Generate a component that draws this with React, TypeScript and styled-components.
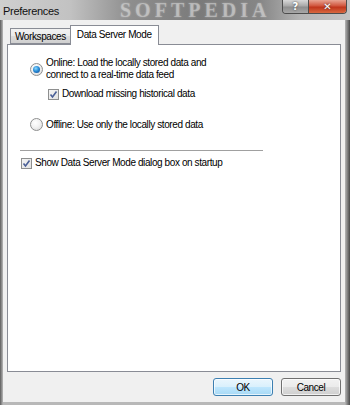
import React, { useState } from 'react';
import styled, { createGlobalStyle } from 'styled-components';

const GlobalStyle = createGlobalStyle`
  html, body {
    margin: 0;
    padding: 0;
    background: #6a6a6a;
  }
  * { box-sizing: border-box; }
`;

const Window = styled.div`
  width: 350px;
  height: 405px;
  display: flex;
  flex-direction: column;
  background: linear-gradient(90deg, #5c5c5c 0px, #9a9a9a 2px, #b8b8b8 3px, #b8b8b8 345px, #8a8a8a 347px, #4a4a4a 350px);
  font-family: "Liberation Sans", Arial, sans-serif;
  font-size: 10px;
  letter-spacing: -0.4px;
  color: #000;
  overflow: hidden;
`;

const TitleBar = styled.div`
  height: 20px;
  flex: none;
  display: flex;
  align-items: flex-start;
  position: relative;
  overflow: hidden;
  background: linear-gradient(90deg, #cfcfcf 0px, #c2c2c2 70px, #8e8e8e 130px, #7a7a7a 200px, #868686 260px, #b4b4b4 300px, #c4c4c4 350px);
`;

const Title = styled.div`
  padding: 5px 0 0 3px;
  font-size: 11px;
  letter-spacing: -0.3px;
  color: #111;
  flex: 1;
`;

const Watermark = styled.div`
  position: absolute;
  left: 120px;
  top: 0;
  font-family: "Liberation Serif", serif;
  font-weight: bold;
  font-size: 20px;
  line-height: 20px;
  letter-spacing: 4px;
  color: rgba(225, 225, 225, 0.45);
  text-shadow: 0 0 2px rgba(255, 255, 255, 0.3);
  pointer-events: none;
`;

const CaptionButtons = styled.div`
  display: flex;
  margin-right: 3px;
  height: 14px;
  border: 1px solid #4d4d4d;
  border-top: none;
  border-radius: 0 0 4px 4px;
  overflow: hidden;
  position: relative;
`;

const CaptionButton = styled.div<{ $close?: boolean }>`
  width: ${p => (p.$close ? '38px' : '25px')};
  height: 100%;
  display: flex;
  align-items: center;
  justify-content: center;
  color: #fff;
  font-family: "DejaVu Sans", sans-serif;
  font-weight: bold;
  font-size: 10px;
  letter-spacing: 0;
  border-left: ${p => (p.$close ? '1px solid #4d4d4d' : 'none')};
  background: ${p =>
    p.$close
      ? 'linear-gradient(180deg, #e8a493 0%, #d1563e 45%, #c0351c 55%, #d8683f 100%)'
      : 'linear-gradient(180deg, #d8d8d8 0%, #a9a9a9 45%, #8e8e8e 55%, #a8a8a8 100%)'};
  text-shadow: 0 0 2px #333;
`;

const Body = styled.div`
  flex: 1;
  margin: 0 5px 3px 3px;
  background: #f0f0f0;
  display: flex;
  flex-direction: column;
  padding: 5px 4px 6px 4px;
`;

const TabStrip = styled.div`
  display: flex;
  align-items: flex-end;
  height: 19px;
  padding-left: 3px;
  position: relative;
  z-index: 1;
`;

const Tab = styled.div<{ $active?: boolean }>`
  height: ${p => (p.$active ? '20px' : '16px')};
  padding: ${p => (p.$active ? '3px 6px 0 6px' : '2px 4px 0 4px')};
  margin-bottom: ${p => (p.$active ? '-1px' : '0')};
  border: 1px solid #898c95;
  border-bottom: ${p => (p.$active ? 'none' : '1px solid #898c95')};
  border-right: ${p => (p.$active ? '1px solid #898c95' : 'none')};
  background: ${p => (p.$active ? '#fff' : 'linear-gradient(180deg, #f2f2f2 0%, #ebebeb 50%, #dddddd 51%, #cfcfcf 100%)')};
  white-space: nowrap;
  cursor: default;
`;

const Panel = styled.div`
  flex: 1;
  background: #fff;
  border: 1px solid #898c95;
  display: flex;
  flex-direction: column;
  padding: 11px 0 0 0;
`;

const OptionRow = styled.div<{ $top: number; $left: number }>`
  display: flex;
  align-items: center;
  margin-top: ${p => p.$top}px;
  margin-left: ${p => p.$left}px;
  gap: 3px;
`;

const Label = styled.div`
  line-height: 12px;
  white-space: nowrap;
`;

const Radio = styled.div<{ $checked?: boolean }>`
  width: 13px;
  height: 13px;
  border-radius: 50%;
  border: 1px solid #8e8f8f;
  background: radial-gradient(circle at 40% 35%, #ffffff 0%, #f2f2f2 45%, #d4d4d4 100%);
  display: flex;
  align-items: center;
  justify-content: center;
  flex: none;
  &::after {
    content: '';
    display: ${p => (p.$checked ? 'block' : 'none')};
    width: 7px;
    height: 7px;
    border-radius: 50%;
    background: radial-gradient(circle at 40% 35%, #8fd9ff 0%, #2a8fd8 45%, #0f3f8c 100%);
  }
`;

const Box = styled.div`
  width: 11px;
  height: 11px;
  border: 1px solid #8e8f8f;
  background: linear-gradient(135deg, #f4f4f4 0%, #e2e2e2 100%);
  display: flex;
  align-items: center;
  justify-content: center;
  flex: none;
`;

const Separator = styled.div`
  margin: 19px 0 0 12px;
  width: 243px;
  height: 2px;
  border-top: 1px solid #a0a0a0;
  border-bottom: 1px solid #ffffff;
`;

const ButtonRow = styled.div`
  display: flex;
  justify-content: flex-end;
  gap: 8px;
  margin-top: 6px;
`;

const Button = styled.button<{ $default?: boolean }>`
  width: 60px;
  height: 18px;
  padding: 0;
  font-family: inherit;
  font-size: 10px;
  letter-spacing: inherit;
  color: #000;
  border-radius: 3px;
  border: 1px solid ${p => (p.$default ? '#3c7fb1' : '#707070')};
  background: ${p =>
    p.$default
      ? 'linear-gradient(180deg, #eaf6fd 0%, #d9f0fc 50%, #bee6fd 51%, #a7d9f5 100%)'
      : 'linear-gradient(180deg, #f2f2f2 0%, #ebebeb 50%, #dddddd 51%, #cfcfcf 100%)'};
  box-shadow: inset 0 0 0 1px rgba(255, 255, 255, 0.7);
  cursor: default;
`;

function Check() {
  return (
    <svg width="9" height="9" viewBox="0 0 9 9">
      <path d="M1.5 4.5 L3.5 7 L7.5 1.5" fill="none" stroke="#4a5f97" strokeWidth="1.6" />
    </svg>
  );
}

export default function App() {
  const [mode, setMode] = useState<'online' | 'offline'>('online');
  const [download, setDownload] = useState(true);
  const [showOnStartup, setShowOnStartup] = useState(true);

  return (
    <>
      <GlobalStyle />
      <Window>
        <TitleBar>
          <Title>Preferences</Title>
          <Watermark>SOFTPEDIA</Watermark>
          <CaptionButtons>
            <CaptionButton>?</CaptionButton>
            <CaptionButton $close>✕</CaptionButton>
          </CaptionButtons>
        </TitleBar>
        <Body>
          <TabStrip>
            <Tab>Workspaces</Tab>
            <Tab $active>Data Server Mode</Tab>
          </TabStrip>
          <Panel>
            <OptionRow $top={1} $left={22} onClick={() => setMode('online')}>
              <Radio $checked={mode === 'online'} />
              <Label>
                Online: Load the locally stored data and
                <br />
                connect to a real-time data feed
              </Label>
            </OptionRow>
            <OptionRow $top={7} $left={40} onClick={() => setDownload(!download)}>
              <Box>{download && <Check />}</Box>
              <Label>Download missing historical data</Label>
            </OptionRow>
            <OptionRow $top={18} $left={22} onClick={() => setMode('offline')}>
              <Radio $checked={mode === 'offline'} />
              <Label>Offline: Use only the locally stored data</Label>
            </OptionRow>
            <Separator />
            <OptionRow $top={5} $left={13} onClick={() => setShowOnStartup(!showOnStartup)}>
              <Box>{showOnStartup && <Check />}</Box>
              <Label>Show Data Server Mode dialog box on startup</Label>
            </OptionRow>
          </Panel>
          <ButtonRow>
            <Button $default>OK</Button>
            <Button>Cancel</Button>
          </ButtonRow>
        </Body>
      </Window>
    </>
  );
}
